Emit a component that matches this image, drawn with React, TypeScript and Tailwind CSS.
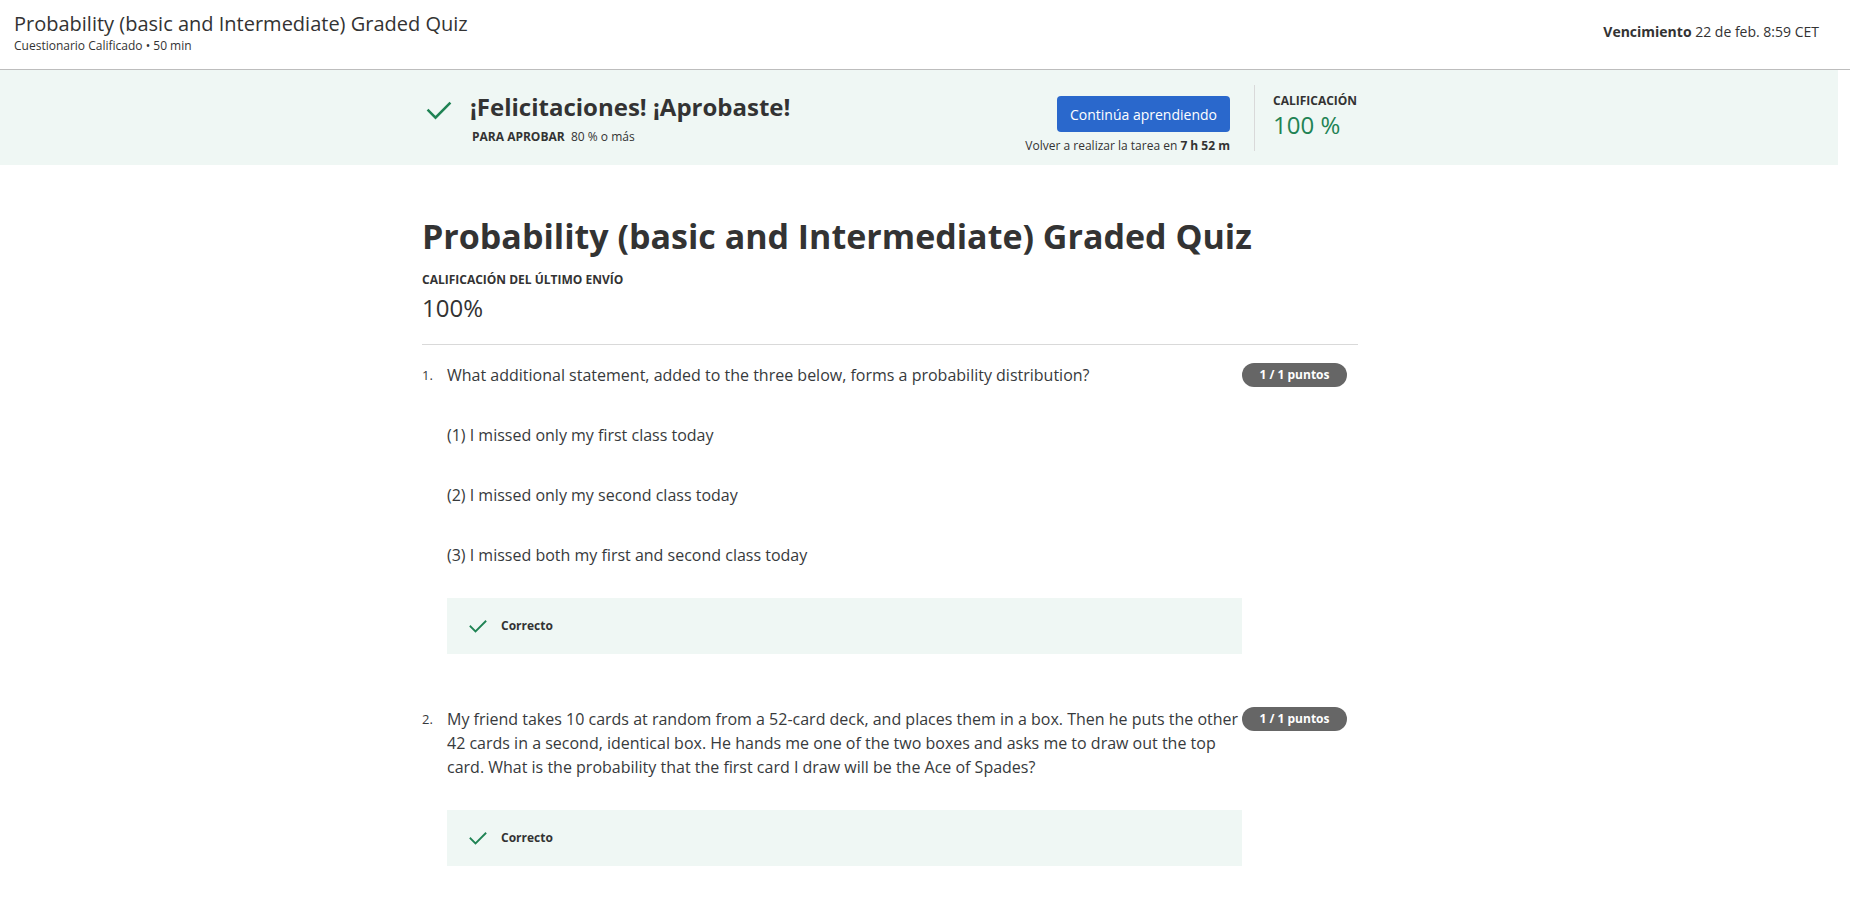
import React from 'react';

const font = { fontFamily: '"Open Sans", "Liberation Sans", sans-serif' };

function Check({ size = 28 }: { size?: number }) {
  return (
    <svg width={size} height={size} viewBox="0 0 24 24" fill="none">
      <path d="M3 12.5l6 6L21 6.5" stroke="#1f8354" strokeWidth="2.2" strokeLinecap="square" />
    </svg>
  );
}

function Badge() {
  return (
    <div className="h-6 w-[105px] shrink-0 rounded-full bg-[#666666] text-white text-xs font-bold flex items-center justify-center">
      1 / 1 puntos
    </div>
  );
}

function Correct() {
  return (
    <div className="h-14 w-[795px] bg-[#eff7f4] flex items-center pl-[21px] gap-[13px]">
      <Check size={20} />
      <span className="text-[12px] font-bold text-[#333333]">Correcto</span>
    </div>
  );
}

const options = [
  '(1) I missed only my first class today',
  '(2) I missed only my second class today',
  '(3) I missed both my first and second class today',
];

export default function App() {
  return (
    <div style={font} className="min-h-screen bg-white text-[#373a3c]">
      {/* Header */}
      <header className="h-[70px] border-b border-[#bdbdbd] flex justify-between pl-[14px] pr-[31px] pt-[10px]">
        <div>
          <h1 className="text-[20px] leading-7 text-[#333333]">Probability (basic and Intermediate) Graded Quiz</h1>
          <p className="text-[12px] leading-4 text-[#333333]">Cuestionario Calificado • 50 min</p>
        </div>
        <div className="text-[14px] leading-5 mt-[12px] text-[#333333]">
          <span className="font-bold">Vencimiento</span> 22 de feb. 8:59 CET
        </div>
      </header>

      {/* Passed banner */}
      <section className="h-[95px] mr-3 bg-[#eff7f4]">
        <div className="ml-[422px] w-[936px] flex">
          <div className="flex gap-[17px] mt-[21px]">
            <div className="mt-[5px] ml-[3px]">
              <Check size={28} />
            </div>
            <div>
              <h2 className="text-[24px] leading-8 font-bold text-[#333333]">¡Felicitaciones! ¡Aprobaste!</h2>
              <p className="text-[12px] leading-4 mt-[6px] ml-[2px] text-[#333333]">
                <span className="font-bold">PARA APROBAR</span>&nbsp; 80 % o más
              </p>
            </div>
          </div>
          <div className="ml-auto flex flex-col items-end mt-[26px]">
            <button className="h-9 w-[173px] rounded-sm bg-[#2a68cc] text-white text-[14px]">Continúa aprendiendo</button>
            <p className="text-[12px] leading-4 mt-[6px] text-[#333333]">
              Volver a realizar la tarea en <span className="font-bold">7 h 52 m</span>
            </p>
          </div>
          <div className="ml-6 mt-[15px] h-[66px] w-px bg-[#d9d9d9]" />
          <div className="pl-[18px] w-[103px] mt-[23px]">
            <p className="text-[12px] leading-4 font-bold text-[#333333]">CALIFICACIÓN</p>
            <p className="text-[24px] leading-8 text-[#1f8354]">100 %</p>
          </div>
        </div>
      </section>

      {/* Main */}
      <main className="ml-[422px] w-[936px] pt-[48px]">
        <h1 className="text-[34px] leading-[46px] font-bold text-[#333333]">
          Probability (basic and Intermediate) Graded Quiz
        </h1>
        <p className="mt-[13px] text-[12px] leading-4 font-bold text-[#333333]">CALIFICACIÓN DEL ÚLTIMO ENVÍO</p>
        <p className="mt-1 text-[24px] leading-8 text-[#333333]">100%</p>
        <div className="mt-5 border-t border-[#d9d9d9]" />

        {/* Question 1 */}
        <div className="mt-[18px] flex">
          <span className="w-[25px] shrink-0 text-[13px] leading-6">1.</span>
          <div className="w-[795px]">
            <p className="text-[16px] leading-6">
              What additional statement, added to the three below, forms a probability distribution?
            </p>
            {options.map((o) => (
              <p key={o} className="mt-9 text-[16px] leading-6">
                {o}
              </p>
            ))}
            <div className="mt-[31px]">
              <Correct />
            </div>
          </div>
          <Badge />
        </div>

        {/* Question 2 */}
        <div className="mt-[53px] flex">
          <span className="w-[25px] shrink-0 text-[13px] leading-6">2.</span>
          <div className="w-[795px]">
            <p className="text-[16px] leading-6">
              My friend takes 10 cards at random from a 52-card deck, and places them in a box. Then he puts the other
              42 cards in a second, identical box. He hands me one of the two boxes and asks me to draw out the top
              card. What is the probability that the first card I draw will be the Ace of Spades?
            </p>
            <div className="mt-[31px]">
              <Correct />
            </div>
          </div>
          <Badge />
        </div>
      </main>
    </div>
  );
}
